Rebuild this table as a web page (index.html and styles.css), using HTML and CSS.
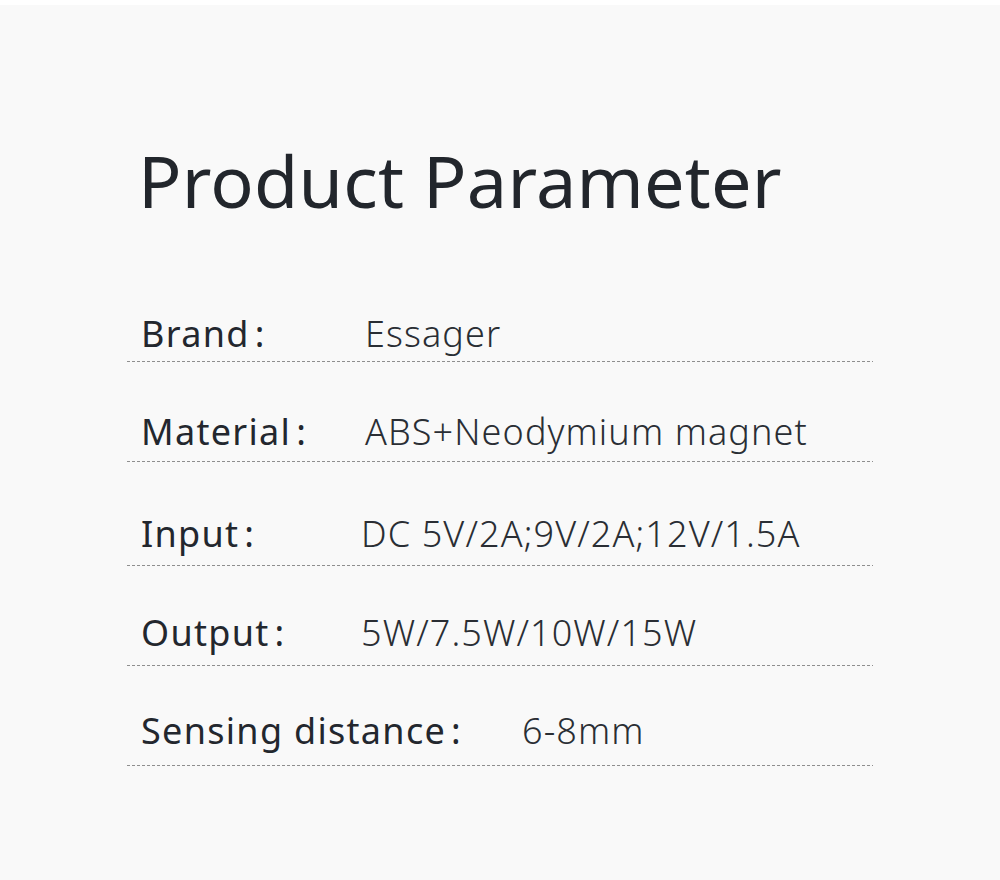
FILE: index.html
```html
<!DOCTYPE html>
<html lang="en">
<head>
    <meta charset="UTF-8">
    <meta name="viewport" content="width=device-width, initial-scale=1.0">
    <title>Product Parameter</title>
    <link rel="stylesheet" href="styles.css">
</head>
<body>
    <div class="sheet">
        <h1 class="sheet-title">Product Parameter</h1>

        <div class="param">
            <div class="param-label">Brand<span class="colon">:</span></div>
            <div class="param-value">Essager</div>
        </div>
        <div class="param">
            <div class="param-label">Material<span class="colon">:</span></div>
            <div class="param-value">ABS+Neodymium magnet</div>
        </div>
        <div class="param">
            <div class="param-label">Input<span class="colon">:</span></div>
            <div class="param-value">DC 5V/2A;9V/2A;12V/1.5A</div>
        </div>
        <div class="param">
            <div class="param-label">Output<span class="colon">:</span></div>
            <div class="param-value">5W/7.5W/10W/15W</div>
        </div>
        <div class="param wide">
            <div class="param-label">Sensing distance<span class="colon">:</span></div>
            <div class="param-value">6-8mm</div>
        </div>
    </div>
</body>
</html>
```

FILE: styles.css
```css
body {
    margin: 0;
    background-color: #f9f9f9;
    border-top: 5px solid #ffffff;
    min-height: 875px;
    font-family: 'Noto Sans', 'Open Sans', sans-serif;
    color: #23272e;
}

.sheet {
    width: 746px;
    margin-left: 127px;
    padding-top: 139px;
}

.sheet-title {
    margin: 0 0 46px 11px;
    font-size: 72px;
    line-height: 72px;
    font-weight: 400;
    color: #22262c;
    letter-spacing: 0.2px;
}

.param {
    display: flex;
    align-items: baseline;
    height: 50px;
    padding: 47px 0 3px 14px;
    font-size: 36px;
    line-height: 50px;
    background-image: linear-gradient(to right, #8f8f8f 3px, transparent 3px);
    background-size: 5px 1px;
    background-repeat: repeat-x;
    background-position: left bottom;
}

/* the lower rows sit a little further from their rules */
.param:nth-of-type(2) {
    padding-top: 45px;
    padding-bottom: 5px;
}

.param:nth-of-type(3) {
    padding-top: 47px;
    padding-bottom: 7px;
}

.param:nth-of-type(4) {
    padding-top: 42px;
    padding-bottom: 8px;
}

.param:nth-of-type(5) {
    padding-top: 40px;
    padding-bottom: 10px;
}

.param-label {
    width: 224px;
    flex-shrink: 0;
    font-weight: 400;
    color: #23272e;
    letter-spacing: 1.3px;
}

.param:nth-of-type(3) .param-label,
.param:nth-of-type(4) .param-label {
    width: 220px;
}

.param.wide .param-label {
    width: 381px;
}

.colon {
    margin-left: 5px;
}

.param-value {
    font-weight: 300;
    color: #2a2e34;
    letter-spacing: 1.1px;
}
```
